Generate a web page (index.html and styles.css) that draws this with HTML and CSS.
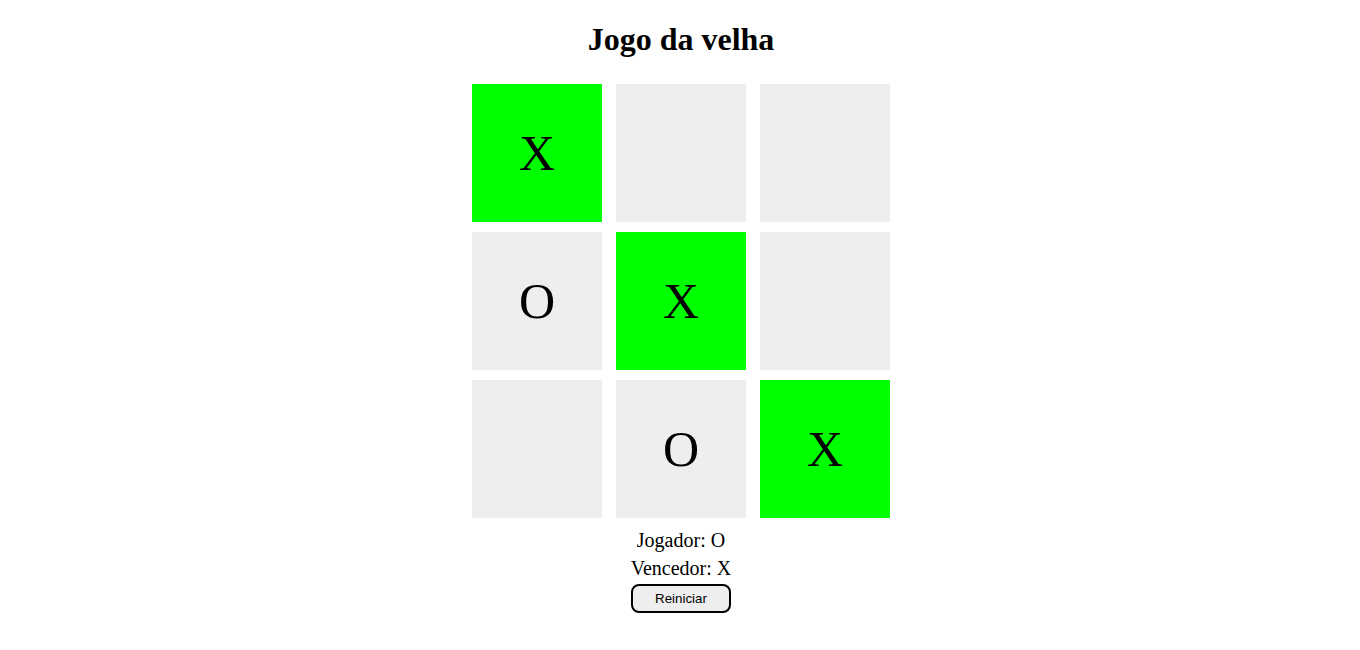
FILE: index.html
```html
<!DOCTYPE html>
<html lang="pt">
<head>
<meta charset="utf-8">
<title>Jogo da velha</title>
<link rel="stylesheet" href="styles.css">
</head>
<body>
<main class="game">
  <h1 class="title">Jogo da velha</h1>
  <div class="board">
    <div class="cell win">X</div>
    <div class="cell"></div>
    <div class="cell"></div>
    <div class="cell">O</div>
    <div class="cell win">X</div>
    <div class="cell"></div>
    <div class="cell"></div>
    <div class="cell">O</div>
    <div class="cell win">X</div>
  </div>
  <p class="status">Jogador: O</p>
  <p class="status">Vencedor: X</p>
  <button class="reset">Reiniciar</button>
</main>
</body>
</html>
```
FILE: styles.css
```css
html, body {
  margin: 0;
  padding: 0;
  background: #fff;
}
body {
  font-family: "Liberation Serif", "Times New Roman", serif;
  color: #000;
}
.game {
  display: flex;
  flex-direction: column;
  align-items: center;
  padding-left: 2px;
}
.title {
  font-size: 32px;
  font-weight: bold;
  line-height: 37px;
  margin: 21px 0 26px;
}
.board {
  display: grid;
  grid-template-columns: repeat(3, 130px);
  grid-auto-rows: 138px;
  column-gap: 14px;
  row-gap: 10px;
}
.cell {
  background: #eeeeee;
  display: flex;
  align-items: center;
  justify-content: center;
  font-size: 50px;
  line-height: 1;
}
.cell.win {
  background: #00ff00;
}
.status {
  margin: 0;
  font-size: 20px;
  line-height: 28px;
}
.status:first-of-type {
  margin-top: 8px;
}
.reset {
  margin-top: 2px;
  width: 100px;
  height: 29px;
  box-sizing: border-box;
  border: 2px solid #000;
  border-radius: 8px;
  background: #eeeeee;
  font-family: "Liberation Sans", Arial, sans-serif;
  font-size: 13.33px;
  color: #000;
  padding: 0;
}
```
